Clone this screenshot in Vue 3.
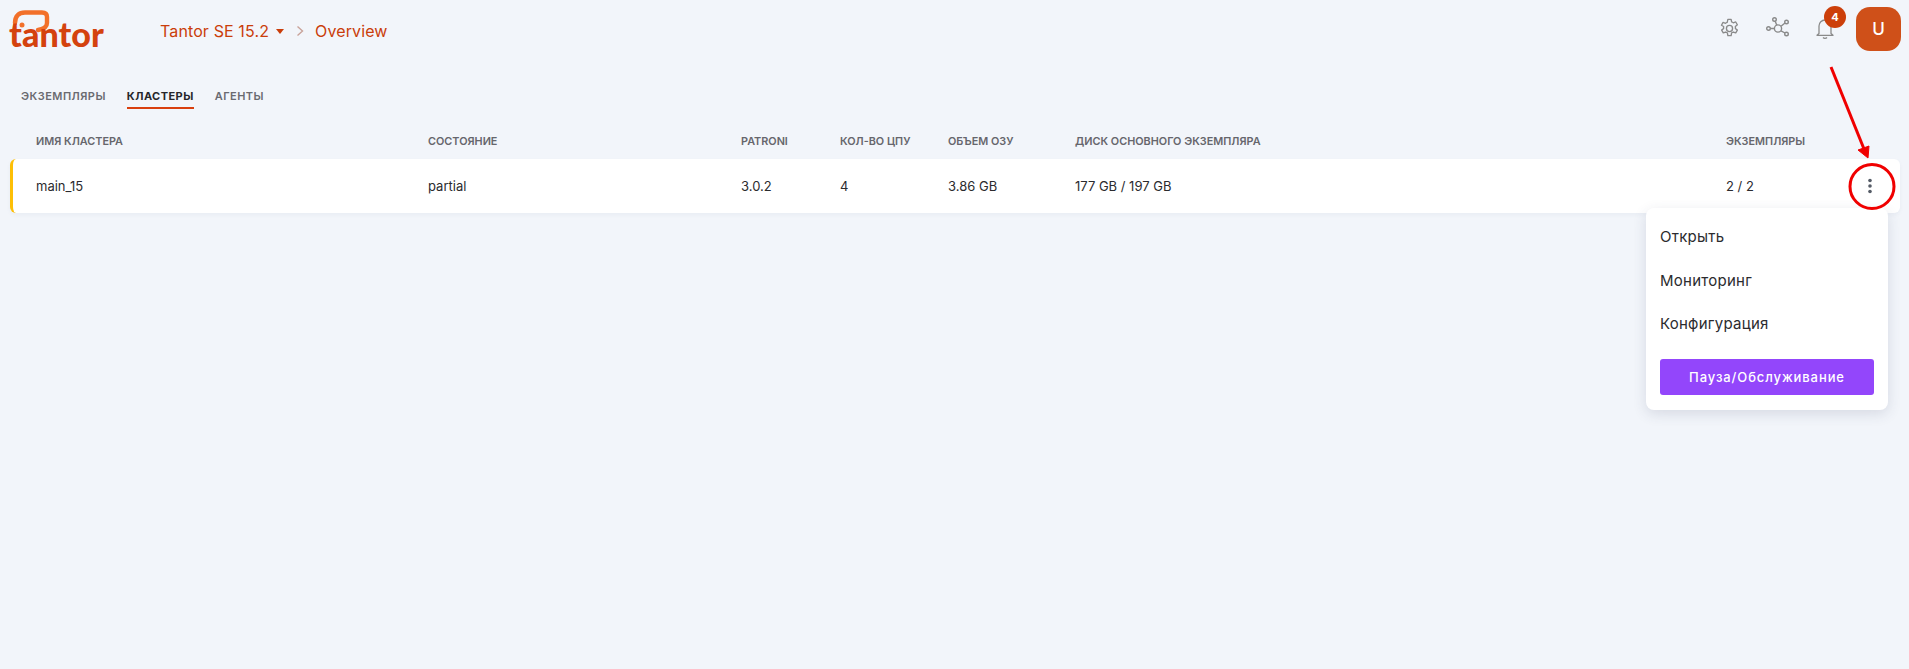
<script setup>
const columns = [
  { title: 'Имя кластера', value: 'main_15' },
  { title: 'Состояние', value: 'partial' },
  { title: 'Patroni', value: '3.0.2' },
  { title: 'Кол-во ЦПУ', value: '4' },
  { title: 'Объем ОЗУ', value: '3.86 GB' },
  { title: 'Диск основного экземпляра', value: '177 GB / 197 GB' },
  { title: 'Экземпляры', value: '2 / 2' },
]
const tabs = [
  { label: 'Экземпляры', active: false },
  { label: 'Кластеры', active: true },
  { label: 'Агенты', active: false },
]
const menuItems = ['Открыть', 'Мониторинг', 'Конфигурация']
</script>

<template>
  <div class="page">
    <header class="topbar">
      <div class="logo">
        <svg class="logo-bubble" width="60" height="30" viewBox="0 0 60 30">
          <path d="M3 15 C3 8 7 4.5 13 4.5 L30 4.5 C33 4.5 35 6 35 9 L35 15 C35 19 32 21 26 22" fill="none" stroke="#f2702a" stroke-width="4.4" stroke-linecap="round"/>
          <circle cx="10" cy="17" r="2.5" fill="#f2702a"/>
        </svg>
        <span class="logo-word">tantor</span>
      </div>
      <nav class="crumbs">
        <span>Tantor SE 15.2</span>
        <i class="caret"></i>
        <svg class="chev" width="8" height="12" viewBox="0 0 8 12"><path d="M1.5 1.5 L6.5 6 L1.5 10.5" fill="none" stroke="#c9a39a" stroke-width="1.4"/></svg>
        <span>Overview</span>
      </nav>
      <div class="actions">
        <svg class="ico gear" width="23" height="23" viewBox="0 0 24 24" fill="none" stroke="#8a8a8a" stroke-width="1.4" stroke-linejoin="round">
          <circle cx="12" cy="12" r="3.2"/>
          <path d="M10.3 2.5h3.4l.5 2.7c.6.2 1.2.5 1.7.9l2.6-.9 1.7 2.9-2.1 1.8c.1.7.1 1.3 0 2l2.1 1.8-1.7 2.9-2.6-.9c-.5.4-1.1.7-1.7.9l-.5 2.8h-3.4l-.5-2.8c-.6-.2-1.2-.5-1.7-.9l-2.6.9-1.7-2.9 2.1-1.8c-.1-.7-.1-1.3 0-2L3.6 8.6l1.7-2.9 2.6.9c.5-.4 1.1-.7 1.7-.9z"/>
        </svg>
        <svg class="ico graph" width="24" height="24" viewBox="0 0 24 24" fill="none" stroke="#8a8a8a" stroke-width="1.4">
          <circle cx="12" cy="12.5" r="3.6"/>
          <circle cx="8.5" cy="3.5" r="1.8"/><circle cx="20.5" cy="6" r="1.8"/>
          <circle cx="2.5" cy="12.5" r="1.8"/><circle cx="20.5" cy="18" r="1.8"/>
          <path d="M9.2 5.2 L10.8 9.2 M19 7 L15 10.3 M4.3 12.5 H8.4 M15 14.8 L19 17"/>
        </svg>
        <span class="bell-wrap">
          <svg width="24" height="24" viewBox="0 0 24 24" fill="none" stroke="#8a8a8a" stroke-width="1.3" stroke-linejoin="round">
            <path d="M6 17.5V10a6 6 0 0 1 12 0v7.5l2 1.8H4z"/><path d="M10 21.5c1 1 3 1 4 0"/>
          </svg>
          <b class="badge">4</b>
        </span>
        <span class="avatar">U</span>
      </div>
    </header>

    <nav class="tabs">
      <a v-for="t in tabs" :key="t.label" class="tab" :class="{ active: t.active }">{{ t.label }}</a>
    </nav>

    <section class="table">
      <div class="head">
        <span v-for="c in columns" :key="c.title">{{ c.title }}</span>
      </div>
      <div class="row">
        <span v-for="c in columns" :key="c.title">{{ c.value }}</span>
        <svg class="dots" width="4" height="16" viewBox="0 0 4 16" fill="#555b66">
          <circle cx="2" cy="2.5" r="1.8"/><circle cx="2" cy="8" r="1.8"/><circle cx="2" cy="13.5" r="1.8"/>
        </svg>
        <div class="menu">
          <a v-for="m in menuItems" :key="m" class="menu-item">{{ m }}</a>
          <button class="pause">Пауза/Обслуживание</button>
        </div>
      </div>
    </section>

    <svg class="annotation" width="70" height="160" viewBox="0 0 70 160">
      <path d="M2 1 L35 83" stroke="#f00000" stroke-width="3" fill="none"/>
      <path d="M39 92 L29 84 L40 80 Z" fill="#f00000" stroke="#f00000" stroke-width="1"/>
      <circle cx="43" cy="120.5" r="22" fill="none" stroke="#f00000" stroke-width="3"/>
    </svg>
  </div>
</template>

<style>
html, body { margin: 0; background: #f2f5fa; }
</style>

<style scoped>
.page {
  position: relative;
  width: 1909px;
  height: 669px;
  overflow: hidden;
  background: #f2f5fa;
  font-family: Inter, "Noto Sans", sans-serif;
  color: #2b2b2e;
}
.topbar {
  display: flex;
  align-items: center;
  height: 58px;
  padding: 0 8px;
}
.logo {
  position: relative;
  width: 152px;
  height: 48px;
  flex: none;
}
.logo-bubble { position: absolute; left: 4px; top: 3px; }
.logo-word {
  position: absolute;
  left: 1px;
  top: 11px;
  font: 900 34px/36px Lato, sans-serif;
  letter-spacing: 0.1px;
  color: #d4420e;
}
.crumbs {
  display: flex;
  align-items: center;
  font-size: 16px;
  letter-spacing: 0.12px;
  color: #ca3d0a;
  margin-top: 3px;
}
.caret {
  width: 0;
  height: 0;
  margin: 1px 0 0 7px;
  border: 4.5px solid transparent;
  border-top: 5px solid #ca3d0a;
  border-bottom: 0;
}
.chev { margin: 0 11px 0 12px; }
.actions {
  display: flex;
  align-items: center;
  margin-left: auto;
}
.ico { display: block; margin-bottom: 2px; }
.gear { margin-right: 25px; }
.graph { margin-right: 23px; }
.bell-wrap {
  position: relative;
  display: block;
  width: 24px;
  height: 24px;
  margin: 0 19px 2px 0;
}
.badge {
  position: absolute;
  left: 11px;
  top: -10px;
  width: 22px;
  height: 22px;
  border-radius: 50%;
  background: #cc3f0a;
  color: #fff;
  font-size: 11px;
  font-weight: 700;
  line-height: 22px;
  text-align: center;
}
.avatar {
  width: 45px;
  height: 44px;
  border-radius: 14px;
  background: #cf5019;
  color: #fff;
  font-size: 17px;
  font-weight: 500;
  line-height: 44px;
  text-align: center;
}
.tabs {
  display: flex;
  gap: 21px;
  padding: 32px 0 0 21px;
}
.tab {
  padding-bottom: 4px;
  border-bottom: 2px solid transparent;
  font-size: 11px;
  font-weight: 600;
  line-height: 13px;
  letter-spacing: 0.45px;
  text-transform: uppercase;
  color: #6a6a70;
}
.tab.active {
  color: #26262a;
  font-weight: 700;
  border-bottom-color: #d9400e;
}
.table { padding: 26px 9px 0 11px; }
.head, .row {
  display: grid;
  grid-template-columns: 392px 313px 99px 108px 127px 651px 1fr;
  padding-left: 25px;
}
.head {
  height: 24px;
  font-size: 10.85px;
  font-weight: 600;
  line-height: 13px;
  text-transform: uppercase;
  color: #66666c;
}
.row {
  position: relative;
  height: 54px;
  align-items: center;
  background: #fff;
  border-left: 3px solid #fdbf06;
  margin-left: -1px;
  padding-left: 23px;
  border-radius: 6px;
  font-size: 13px;
  box-shadow: 0 2px 4px rgba(60, 80, 120, 0.05);
}
.dots { position: absolute; right: 28px; top: 19px; }
.menu {
  position: absolute;
  right: 12px;
  top: 49px;
  z-index: 2;
  display: flex;
  flex-direction: column;
  box-sizing: border-box;
  width: 242px;
  height: 202px;
  padding: 7px 14px 0;
  background: #fff;
  border-radius: 8px;
  box-shadow: 0 4px 14px rgba(50, 60, 90, 0.14);
}
.menu-item {
  height: 43.5px;
  line-height: 43.5px;
  font-size: 15px;
  letter-spacing: 0.25px;
  color: #2b2b2e;
}
.pause {
  height: 36px;
  margin-top: 13px;
  border: 0;
  border-radius: 3px;
  background: #9346fb;
  color: #fff;
  font-family: inherit;
  font-size: 13px;
  font-weight: 500;
  letter-spacing: 0.9px;
}
.annotation {
  position: absolute;
  left: 1829px;
  top: 66px;
  z-index: 3;
}
</style>
